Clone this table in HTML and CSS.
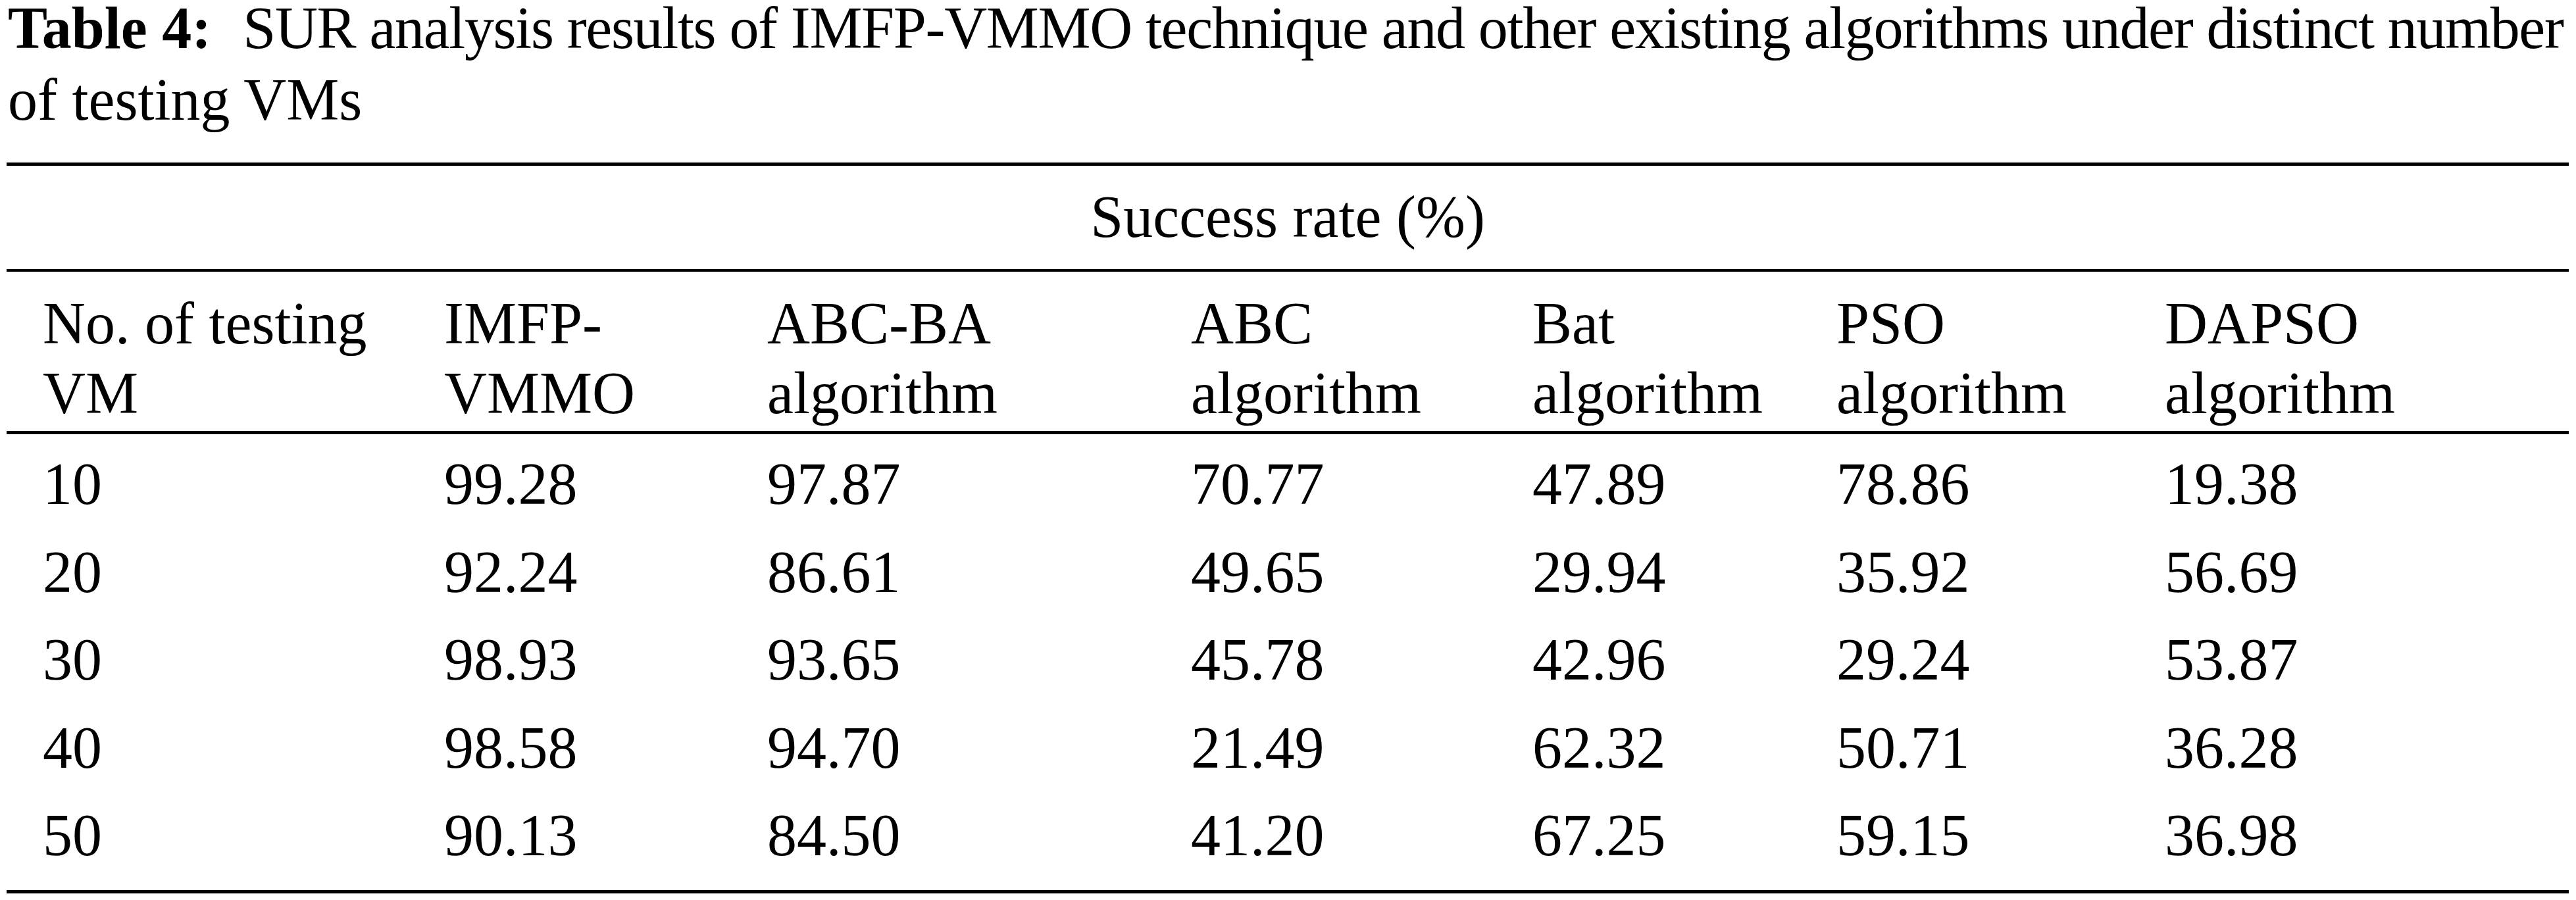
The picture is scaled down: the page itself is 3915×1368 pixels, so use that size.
FILE: index.html
```html
<!DOCTYPE html>
<html lang="en">
<head>
<meta charset="utf-8">
<title>Table 4</title>
<link rel="stylesheet" href="styles.css">
</head>
<body>
<div class="caption">
  <span class="line first"><span class="label">Table 4:</span>SUR analysis results of IMFP-VMMO technique and other existing algorithms under distinct number</span>
  <span class="line">of testing VMs</span>
</div>
<table class="results">
  <colgroup>
    <col class="c1"><col class="c2"><col class="c3"><col class="c4"><col class="c5"><col class="c6"><col class="c7">
  </colgroup>
  <thead>
    <tr class="group">
      <th colspan="7">Success rate (%)</th>
    </tr>
    <tr class="cols">
      <th>No. of testing<br>VM</th>
      <th>IMFP-<br>VMMO</th>
      <th>ABC-BA<br>algorithm</th>
      <th>ABC<br>algorithm</th>
      <th>Bat<br>algorithm</th>
      <th>PSO<br>algorithm</th>
      <th>DAPSO<br>algorithm</th>
    </tr>
  </thead>
  <tbody>
    <tr><td>10</td><td>99.28</td><td>97.87</td><td>70.77</td><td>47.89</td><td>78.86</td><td>19.38</td></tr>
    <tr><td>20</td><td>92.24</td><td>86.61</td><td>49.65</td><td>29.94</td><td>35.92</td><td>56.69</td></tr>
    <tr><td>30</td><td>98.93</td><td>93.65</td><td>45.78</td><td>42.96</td><td>29.24</td><td>53.87</td></tr>
    <tr><td>40</td><td>98.58</td><td>94.70</td><td>21.49</td><td>62.32</td><td>50.71</td><td>36.28</td></tr>
    <tr class="last"><td>50</td><td>90.13</td><td>84.50</td><td>41.20</td><td>67.25</td><td>59.15</td><td>36.98</td></tr>
  </tbody>
</table>
</body>
</html>
```

FILE: styles.css
```css
html, body {
  margin: 0;
  padding: 0;
  background: #ffffff;
}

body {
  padding: 0 11px 0 10px;
  color: #000000;
  font-family: "Liberation Serif", "Times New Roman", serif;
  font-size: 90px;
}

.caption {
  margin-top: -12px;
  margin-bottom: 41px;
  line-height: 109px;
  padding-left: 2px;
}

.caption .line {
  display: block;
  white-space: nowrap;
}

.caption .line.first {
  letter-spacing: -1.35px;
}

.caption .label {
  font-weight: bold;
  letter-spacing: 0;
  margin-right: 48px;
}

.results {
  width: 3894px;
  table-layout: fixed;
  border-collapse: separate;
  border-spacing: 0;
  line-height: 106px;
}

.results col.c1 { width: 610px; }
.results col.c2 { width: 491px; }
.results col.c3 { width: 644px; }
.results col.c4 { width: 519px; }
.results col.c5 { width: 462px; }
.results col.c6 { width: 499px; }
.results col.c7 { width: 669px; }

.results th,
.results td {
  font-weight: normal;
  text-align: left;
  vertical-align: top;
  padding: 0 0 0 55px;
  white-space: nowrap;
}

.results .group th {
  text-align: center;
  padding: 24.6px 0 26.4px 0;
  border-top: 5px solid #000;
  border-bottom: 4px solid #000;
}

.results .cols th {
  padding-top: 25.6px;
  padding-bottom: 4.4px;
  border-bottom: 5px solid #000;
}

.results tbody td {
  padding-top: 23.5px;
  padding-bottom: 4px;
}

.results tbody tr.last td {
  padding-bottom: 29.5px;
  border-bottom: 5px solid #000;
}
```
